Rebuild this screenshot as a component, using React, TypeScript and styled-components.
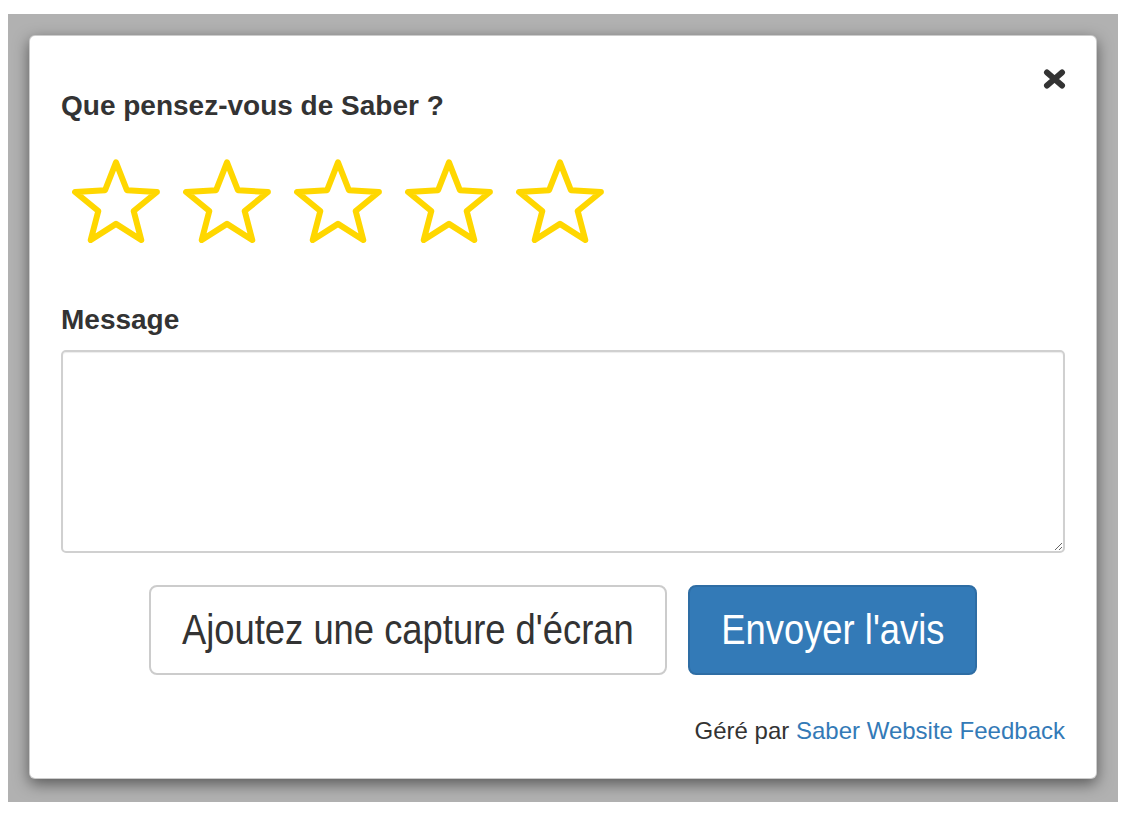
import React from "react";
import styled, { createGlobalStyle } from "styled-components";

const GlobalStyle = createGlobalStyle`
  html, body { margin: 0; padding: 0; background: #ffffff; }
  body { font-family: "Liberation Sans", Arial, Helvetica, sans-serif; color: #333333; }
  * { box-sizing: border-box; }
`;

const Backdrop = styled.div`
  margin: 14px 12px 0 8px;
  height: 788px;
  padding: 21px 21px 22px 21px;
  background: #b1b1b1;
`;

const Modal = styled.div`
  position: relative;
  background: #ffffff;
  border: 1px solid rgba(0, 0, 0, 0.2);
  border-radius: 6px;
  box-shadow: 0 5px 15px rgba(0, 0, 0, 0.5);
  padding: 55px 31px 33px 31px;
  display: flex;
  flex-direction: column;
`;

const CloseButton = styled.button`
  position: absolute;
  top: 33px;
  right: 30px;
  width: 23px;
  height: 20px;
  padding: 0;
  border: 0;
  background: transparent;
  cursor: pointer;
  display: flex;
`;

const Label = styled.div`
  font-size: 28px;
  font-weight: bold;
  line-height: 1.1;
  color: #333333;
`;

const StarRow = styled.div`
  display: flex;
  gap: 23px;
  padding-left: 11px;
  margin-top: 37px;
  margin-bottom: 62px;
`;

const StarSvg = styled.svg`
  display: block;
  width: 88px;
  height: 84px;
  cursor: pointer;
`;

const TextArea = styled.textarea`
  display: block;
  width: 100%;
  height: 203px;
  margin-top: 14px;
  border: 2px solid #d0d0d0;
  border-radius: 5px;
  box-shadow: inset 0 1px 1px rgba(0, 0, 0, 0.075);
  font-family: inherit;
  font-size: 20px;
  padding: 8px 12px;
  resize: vertical;
  outline: none;
`;

const ButtonRow = styled.div`
  display: flex;
  justify-content: center;
  gap: 21px;
  margin-top: 32px;
`;

const Button = styled.button<{ $primary?: boolean; $w: number }>`
  width: ${(p) => p.$w}px;
  height: 90px;
  border-radius: 8px;
  border: 2px solid ${(p) => (p.$primary ? "#2e6da4" : "#cccccc")};
  background: ${(p) => (p.$primary ? "#337ab7" : "#ffffff")};
  color: ${(p) => (p.$primary ? "#ffffff" : "#333333")};
  font-family: "Liberation Sans", Arial, Helvetica, sans-serif;
  font-size: 42px;
  line-height: 1;
  padding: 0;
  display: flex;
  align-items: center;
  justify-content: center;
  cursor: pointer;
  white-space: nowrap;
  overflow: hidden;
`;

const ButtonText = styled.span`
  display: inline-block;
  transform: scaleX(0.866);
  transform-origin: center;
`;

const Footer = styled.div`
  margin-top: 42px;
  text-align: right;
  font-size: 24px;
  line-height: 1.2;
  color: #333333;
`;

const Link = styled.a`
  color: #337ab7;
  text-decoration: none;
`;

function starPoints(cx: number, cy: number, R: number, r: number) {
  const pts: string[] = [];
  for (let i = 0; i < 10; i++) {
    const ang = ((-90 + i * 36) * Math.PI) / 180;
    const rad = i % 2 === 0 ? R : r;
    pts.push(`${(cx + rad * Math.cos(ang)).toFixed(2)},${(cy + rad * Math.sin(ang)).toFixed(2)}`);
  }
  return pts.join(" ");
}

const Star = () => (
  <StarSvg viewBox="0 0 88 84">
    <polygon
      points={starPoints(44, 46.3, 43, 18.6)}
      fill="none"
      stroke="#ffd700"
      strokeWidth={6}
      strokeLinejoin="round"
    />
  </StarSvg>
);

export default function App() {
  return (
    <>
      <GlobalStyle />
      <Backdrop>
        <Modal>
          <CloseButton aria-label="Fermer">
            <svg width="23" height="20" viewBox="0 0 23 20">
              <path d="M4 3.5 L19 16.5 M19 3.5 L4 16.5" stroke="#333" strokeWidth={6} strokeLinecap="round" />
            </svg>
          </CloseButton>
          <Label>Que pensez-vous de Saber ?</Label>
          <StarRow>
            {[0, 1, 2, 3, 4].map((i) => (
              <Star key={i} />
            ))}
          </StarRow>
          <Label>Message</Label>
          <TextArea />
          <ButtonRow>
            <Button $w={518}>
              <ButtonText>Ajoutez une capture d'écran</ButtonText>
            </Button>
            <Button $primary $w={289}>
              <ButtonText>Envoyer l'avis</ButtonText>
            </Button>
          </ButtonRow>
          <Footer>
            Géré par <Link href="#">Saber Website Feedback</Link>
          </Footer>
        </Modal>
      </Backdrop>
    </>
  );
}
